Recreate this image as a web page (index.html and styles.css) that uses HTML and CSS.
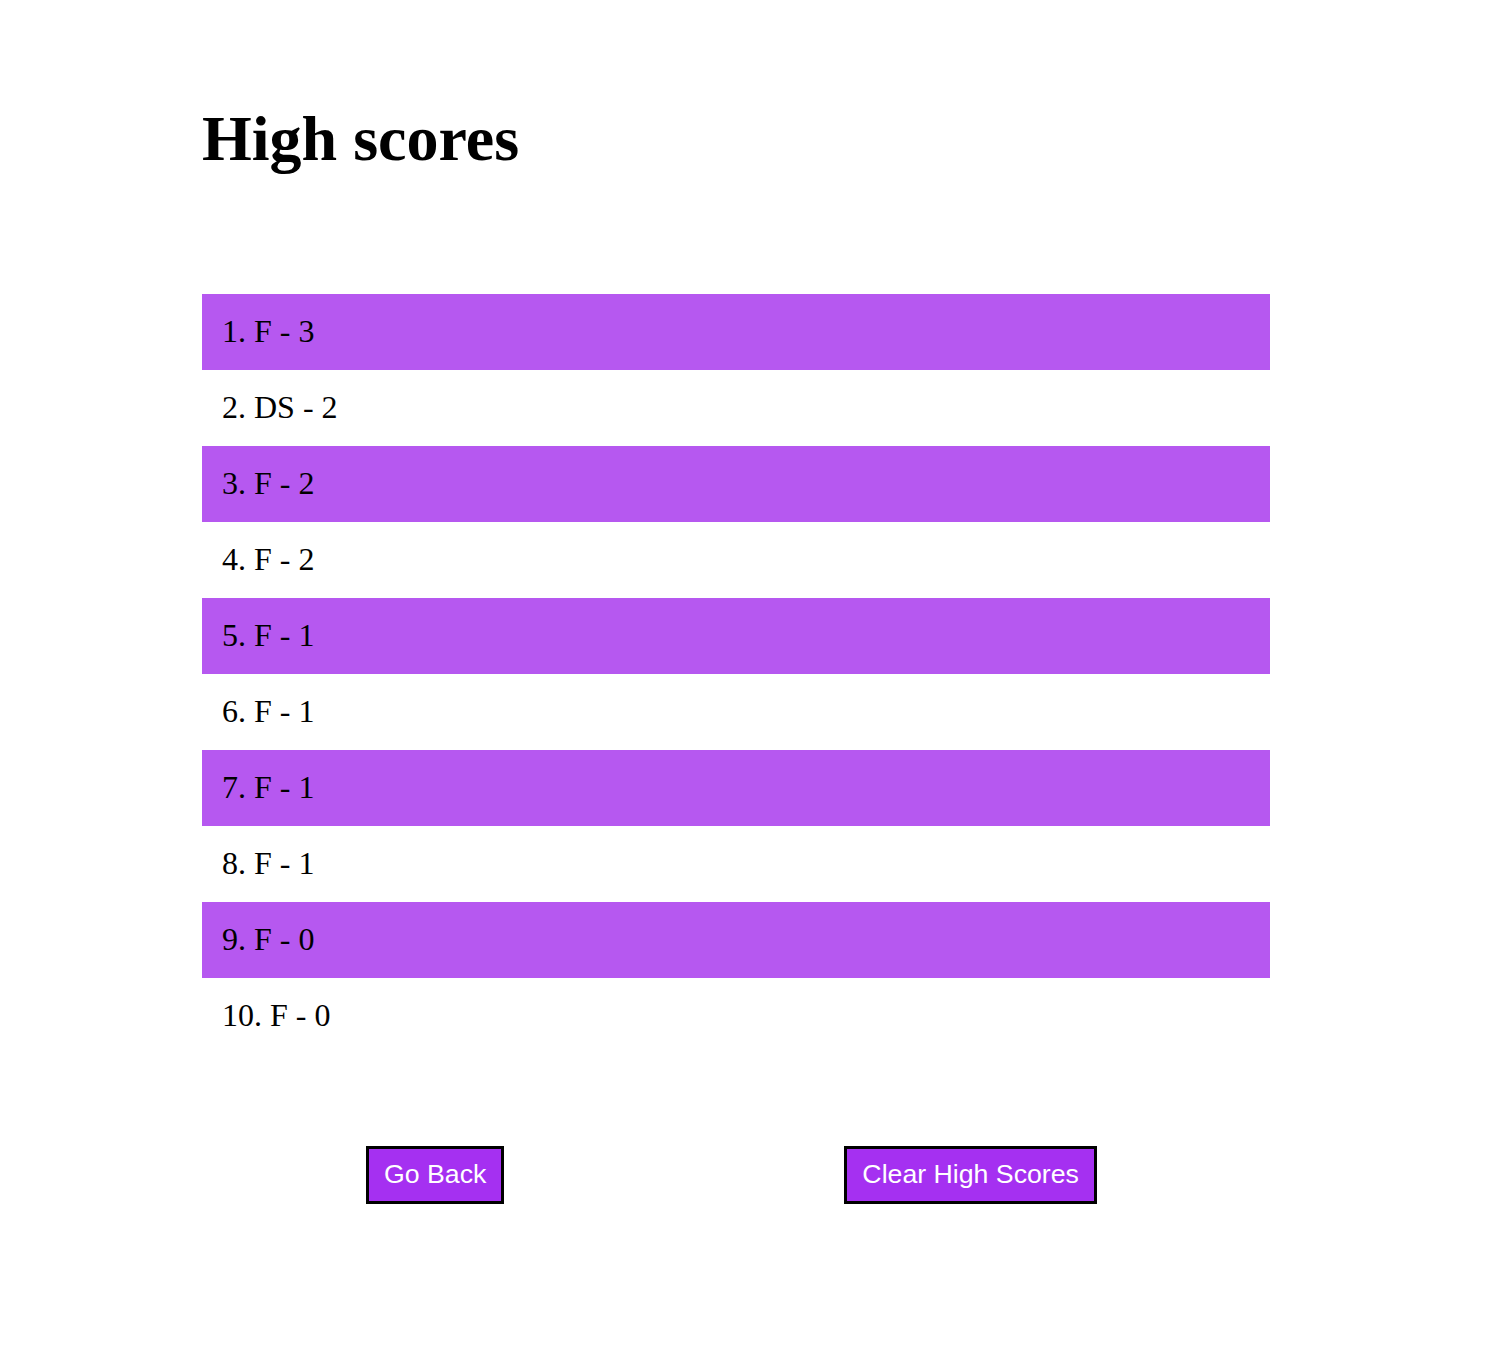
FILE: index.html
```html
<!DOCTYPE html>
<html lang="en">
<head>
<meta charset="utf-8">
<title>High scores</title>
<link rel="stylesheet" href="styles.css">
</head>
<body>
<main class="page">
  <h1 class="title">High scores</h1>
  <ol class="scores">
    <li class="score">1. F - 3</li>
    <li class="score">2. DS - 2</li>
    <li class="score">3. F - 2</li>
    <li class="score">4. F - 2</li>
    <li class="score">5. F - 1</li>
    <li class="score">6. F - 1</li>
    <li class="score">7. F - 1</li>
    <li class="score">8. F - 1</li>
    <li class="score">9. F - 0</li>
    <li class="score">10. F - 0</li>
  </ol>
  <div class="actions">
    <button class="btn btn-back">Go Back</button>
    <button class="btn btn-clear">Clear High Scores</button>
  </div>
</main>
</body>
</html>
```

FILE: styles.css
```css
html, body {
  margin: 0;
  padding: 0;
  background: #ffffff;
}

body {
  font-family: "Liberation Serif", "Times New Roman", serif;
  color: #000000;
}

.page {
  width: 1068px;
  margin-left: 202px;
}

.title {
  margin: 102px 0 0;
  font-size: 64px;
  line-height: 74px;
  font-weight: bold;
}

.scores {
  list-style: none;
  margin: 118px 0 0;
  padding: 0;
}

.score {
  height: 76px;
  padding: 0 20px;
  font-size: 32px;
  line-height: 75px;
  box-sizing: border-box;
}

.score:nth-child(odd) {
  background: #b658f0;
}

.actions {
  display: flex;
  margin-top: 92px;
  padding-left: 164px;
  gap: 340px;
}

.btn {
  font-family: "Liberation Sans", Arial, sans-serif;
  font-size: 26.7px;
  line-height: 31px;
  color: #ffffff;
  background: #a530f1;
  border: 3px solid #000000;
  border-radius: 0;
  padding: 10px 15px 11px;
  margin: 0;
  cursor: pointer;
}
```
